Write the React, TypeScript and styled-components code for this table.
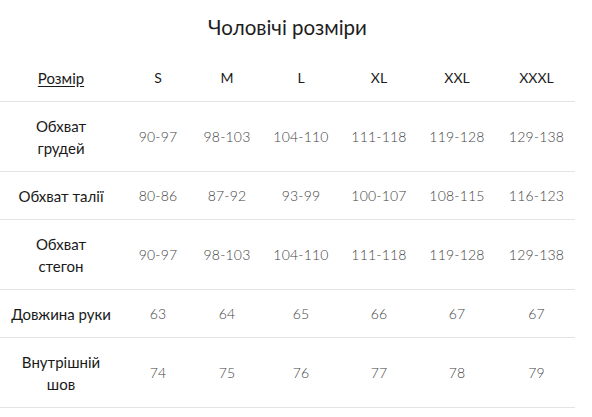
import React from 'react';
import styled, { createGlobalStyle } from 'styled-components';

const GlobalStyle = createGlobalStyle`
  html, body {
    margin: 0;
    padding: 0;
    background: #ffffff;
  }
  body {
    font-family: 'Lato', 'Liberation Sans', sans-serif;
  }
`

const COLUMNS = '122px 72px 66px 82px 74px 82px 77px'

interface RowData {
  label: string[]
  values: string[]
}

const sizes = ['S', 'M', 'L', 'XL', 'XXL', 'XXXL']

const rows: RowData[] = [
  { label: ['Обхват', 'грудей'], values: ['90-97', '98-103', '104-110', '111-118', '119-128', '129-138'] },
  { label: ['Обхват талії'], values: ['80-86', '87-92', '93-99', '100-107', '108-115', '116-123'] },
  { label: ['Обхват', 'стегон'], values: ['90-97', '98-103', '104-110', '111-118', '119-128', '129-138'] },
  { label: ['Довжина руки'], values: ['63', '64', '65', '66', '67', '67'] },
  { label: ['Внутрішній', 'шов'], values: ['74', '75', '76', '77', '78', '79'] },
]

const Page = styled.div`
  width: 575px;
  background: #ffffff;
`

const Title = styled.h2`
  margin: 0;
  height: 54px;
  display: flex;
  align-items: center;
  justify-content: center;
  box-sizing: border-box;
  font-size: 20.5px;
  font-weight: 400;
  color: #1e1e1e;
`

const Row = styled.div`
  display: grid;
  grid-template-columns: ${COLUMNS};
  align-items: center;
  padding: 12.5px 0;
  border-bottom: 1px solid #e4e4e4;
  font-size: 14px;
  line-height: 22px;
`

const LabelCell = styled.div<{ $link?: boolean }>`
  text-align: center;
  color: #1a1a1a;
  font-size: 15px;
  font-weight: 400;
  text-decoration: ${p => (p.$link ? 'underline' : 'none')};
  text-underline-offset: 2px;
`

const SizeCell = styled.div`
  text-align: center;
  color: #1c1c1c;
  font-weight: 400;
`

const ValueCell = styled.div`
  text-align: center;
  color: #444444;
  font-weight: 300;
  letter-spacing: 0.2px;
`

const SizeChart: React.FC = () => {
  return (
    <Page>
      <Title>Чоловічі розміри</Title>
      <Row>
        <LabelCell $link>Розмір</LabelCell>
        {sizes.map(s => (
          <SizeCell key={s}>{s}</SizeCell>
        ))}
      </Row>
      {rows.map((row, i) => (
        <Row key={i}>
          <LabelCell>
            {row.label.map((line, j) => (
              <div key={j}>{line}</div>
            ))}
          </LabelCell>
          {row.values.map((v, j) => (
            <ValueCell key={j}>{v}</ValueCell>
          ))}
        </Row>
      ))}
    </Page>
  )
}

export default function App() {
  return (
    <>
      <GlobalStyle />
      <SizeChart />
    </>
  )
}
